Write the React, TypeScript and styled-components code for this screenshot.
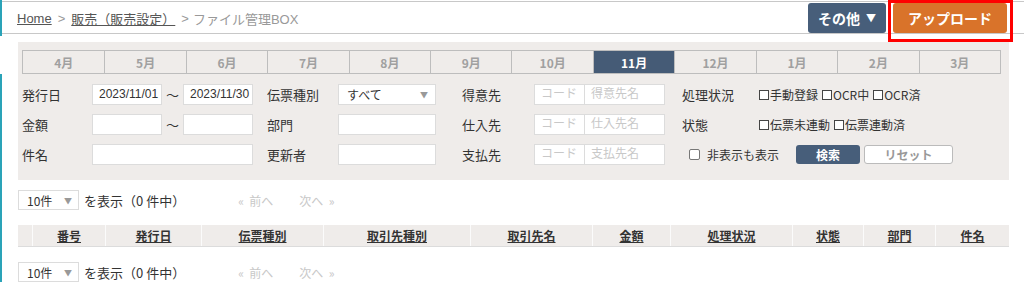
import styled, { createGlobalStyle } from "styled-components";

const colors = {
  teal: "#2aa3b8",
  line: "#c8c8c8",
  panel: "#efecea",
  navy: "#475e7a",
  orange: "#d9732a",
  red: "#ff0000",
  text: "#333333",
  sub: "#999999",
  faint: "#c8c8c8",
  border: "#dcdcdc",
};

const GlobalStyle = createGlobalStyle`
  * { box-sizing: border-box; }
  body {
    margin: 0;
    background: #fff;
    font-family: "Liberation Sans", "Noto Sans CJK JP", sans-serif;
    color: ${colors.text};
  }
`;

const months = ["4月", "5月", "6月", "7月", "8月", "9月", "10月", "11月", "12月", "1月", "2月", "3月"];
const columns = [
  { label: "", width: 14 },
  { label: "番号", width: 73 },
  { label: "発行日", width: 96 },
  { label: "伝票種別", width: 122 },
  { label: "取引先種別", width: 147 },
  { label: "取引先名", width: 122 },
  { label: "金額", width: 78 },
  { label: "処理状況", width: 122 },
  { label: "状態", width: 71 },
  { label: "部門", width: 72 },
  { label: "件名", width: 72 },
];

const Pager = ({ gap }: { gap: number }) => (
  <PagerRow style={{ marginTop: gap }}>
    <PageSelect>
      10件 <Caret>▼</Caret>
    </PageSelect>
    <PagerText>を表示（0 件中）</PagerText>
    <PagerLinks>
      <span>«&nbsp;&nbsp;前へ</span>
      <span>次へ&nbsp;&nbsp;»</span>
    </PagerLinks>
  </PagerRow>
);

export default function App() {
  return (
    <Page>
      <GlobalStyle />
      <Rail>
        <RailTop />
        <RailBottom />
      </Rail>
      <Main>
        <Header>
          <Breadcrumb>
            <Crumb>Home</Crumb>
            <Sep>&gt;</Sep>
            <Crumb>販売（販売設定）</Crumb>
            <Sep>&gt;</Sep>
            <Current>ファイル管理BOX</Current>
          </Breadcrumb>
          <Actions>
            <HeadButton $tone="navy">
              その他 <SmallCaret>▼</SmallCaret>
            </HeadButton>
            <Highlight>
              <HeadButton $tone="orange">アップロード</HeadButton>
            </Highlight>
          </Actions>
        </Header>

        <Body>
          <SearchPanel>
            <MonthTabs>
              {months.map((m) => (
                <MonthTab key={m} $active={m === "11月"}>
                  {m}
                </MonthTab>
              ))}
            </MonthTabs>

            <FormGrid>
              <Label>発行日</Label>
              <Range>
                <Input $w={70}>2023/11/01</Input>
                <Tilde>〜</Tilde>
                <Input $w={70}>2023/11/30</Input>
              </Range>
              <Label>伝票種別</Label>
              <SelectBox>
                すべて <Caret>▼</Caret>
              </SelectBox>
              <Label>得意先</Label>
              <Pair>
                <Input $w={51} $placeholder>コード</Input>
                <Input $w={80} $placeholder>得意先名</Input>
              </Pair>
              <Label>処理状況</Label>
              <Checks>
                <Check><Box />手動登録</Check>
                <Check><Box />OCR中</Check>
                <Check><Box />OCR済</Check>
              </Checks>

              <Label>金額</Label>
              <Range>
                <Input $w={70} />
                <Tilde>〜</Tilde>
                <Input $w={70} />
              </Range>
              <Label>部門</Label>
              <Input $w={98} />
              <Label>仕入先</Label>
              <Pair>
                <Input $w={51} $placeholder>コード</Input>
                <Input $w={80} $placeholder>仕入先名</Input>
              </Pair>
              <Label>状態</Label>
              <Checks>
                <Check><Box />伝票未連動</Check>
                <Check><Box />伝票連動済</Check>
              </Checks>

              <Label>件名</Label>
              <Input $w={161} />
              <Label>更新者</Label>
              <Input $w={98} />
              <Label>支払先</Label>
              <Pair>
                <Input $w={51} $placeholder>コード</Input>
                <Input $w={80} $placeholder>支払先名</Input>
              </Pair>
              <SearchActions>
                <HiddenToggle>
                  <RoundBox />
                  非表示も表示
                </HiddenToggle>
                <SearchButton>検索</SearchButton>
                <ResetButton>リセット</ResetButton>
              </SearchActions>
            </FormGrid>
          </SearchPanel>

          <Pager gap={10} />

          <TableHead>
            {columns.map((c, i) => (
              <HeadCell key={i} style={{ width: c.width }}>
                {c.label && <HeadLink>{c.label}</HeadLink>}
              </HeadCell>
            ))}
          </TableHead>

          <Pager gap={15} />
        </Body>
      </Main>
    </Page>
  );
}

const Page = styled.div`
  display: flex;
  width: 1024px;
  height: 282px;
  overflow: hidden;
`;

const Rail = styled.div`
  display: flex;
  flex-direction: column;
  width: 2px;
  flex-shrink: 0;
`;

const RailTop = styled.div`
  height: 36px;
  background: ${colors.teal};
`;

const RailBottom = styled.div`
  flex: 1;
  margin-top: 38px;
  background: ${colors.teal};
`;

const Main = styled.div`
  flex: 1;
  display: flex;
  flex-direction: column;
`;

const Header = styled.div`
  display: flex;
  align-items: center;
  justify-content: space-between;
  height: 36px;
  margin-top: 1px;
  padding: 0 17px 0 15px;
  border-top: 1px solid ${colors.line};
  border-bottom: 1px solid ${colors.line};
`;

const Breadcrumb = styled.div`
  display: flex;
  align-items: center;
  gap: 6px;
  font-size: 13px;
  padding-top: 1px;
`;

const Crumb = styled.span`
  color: #555;
  text-decoration: underline;
`;

const Sep = styled.span`
  color: ${colors.sub};
`;

const Current = styled.span`
  color: ${colors.sub};
  margin-left: -2px;
`;

const Actions = styled.div`
  display: flex;
  align-items: center;
  gap: 7px;
`;

const HeadButton = styled.div<{ $tone: "navy" | "orange" }>`
  display: flex;
  align-items: center;
  justify-content: center;
  gap: 6px;
  height: 30px;
  width: ${(p) => (p.$tone === "navy" ? "78px" : "114px")};
  border-radius: 3px;
  background: ${(p) => (p.$tone === "navy" ? colors.navy : colors.orange)};
  color: #fff;
  font-size: 14px;
  font-weight: bold;
  font-family: "Noto Sans CJK JP", sans-serif;
`;

const SmallCaret = styled.span`
  font-size: 10px;
`;

const Highlight = styled.div`
  position: relative;
  &::after {
    content: "";
    position: absolute;
    top: -3px;
    left: -5px;
    right: -6px;
    bottom: -9px;
    border: 3px solid ${colors.red};
    pointer-events: none;
  }
`;

const Body = styled.div`
  display: flex;
  flex-direction: column;
  padding: 0 15px 0 16px;
`;

const SearchPanel = styled.div`
  margin-top: 8px;
  background: ${colors.panel};
  padding: 8px 8px 15px 4px;
`;

const MonthTabs = styled.div`
  display: grid;
  grid-template-columns: repeat(12, 1fr);
  border: 1px solid #bdbdbd;
  background: ${colors.panel};
`;

const MonthTab = styled.div<{ $active?: boolean }>`
  height: 22px;
  display: flex;
  align-items: center;
  justify-content: center;
  font-size: 12px;
  font-weight: bold;
  font-family: "Noto Sans CJK JP", sans-serif;
  color: ${(p) => (p.$active ? "#fff" : "#a0a0a0")};
  background: ${(p) => (p.$active ? "#455b76" : "transparent")};
  & + & {
    border-left: 1px solid #bdbdbd;
  }
`;

const FormGrid = styled.div`
  display: grid;
  grid-template-columns: 70px 175px 71px 124px 72px 148px 77px 1fr;
  grid-auto-rows: 21px;
  row-gap: 9px;
  margin-top: 10px;
  align-items: center;
`;

const Label = styled.div`
  font-size: 13px;
  font-family: "Noto Sans CJK JP", sans-serif;
  color: ${colors.text};
`;

const Range = styled.div`
  display: flex;
  align-items: center;
`;

const Pair = styled.div`
  display: flex;
`;

const Input = styled.div<{ $w: number; $placeholder?: boolean }>`
  width: ${(p) => p.$w}px;
  height: 21px;
  background: #fff;
  border: 1px solid ${colors.border};
  font-size: 12px;
  line-height: 19px;
  padding: 0 6px;
  color: ${(p) => (p.$placeholder ? colors.faint : colors.text)};
  white-space: nowrap;
  overflow: hidden;
  & + & {
    border-left: none;
  }
`;

const Tilde = styled.span`
  width: 21px;
  text-align: center;
  font-size: 13px;
`;

const SelectBox = styled.div`
  width: 98px;
  height: 21px;
  background: #fff;
  border: 1px solid ${colors.border};
  display: flex;
  align-items: center;
  justify-content: space-between;
  padding: 0 7px 0 8px;
  font-size: 12px;
  font-family: "Noto Sans CJK JP", sans-serif;
`;

const Caret = styled.span`
  font-size: 8px;
  color: #999;
`;

const Checks = styled.div`
  display: flex;
  gap: 4px;
`;

const Check = styled.label`
  display: flex;
  align-items: center;
  font-size: 12px;
  font-family: "Noto Sans CJK JP", sans-serif;
  color: ${colors.text};
`;

const Box = styled.span`
  width: 10px;
  height: 10px;
  border: 1px solid #444;
  background: #fff;
  margin-right: 1px;
`;

const SearchActions = styled.div`
  grid-column: 7 / 9;
  display: flex;
  align-items: center;
`;

const HiddenToggle = styled.label`
  display: flex;
  align-items: center;
  gap: 7px;
  margin-left: 7px;
  width: 107px;
  font-size: 12px;
  font-family: "Noto Sans CJK JP", sans-serif;
`;

const RoundBox = styled.span`
  width: 11px;
  height: 11px;
  border: 1px solid #777;
  border-radius: 2px;
  background: #fff;
`;

const SearchButton = styled.div`
  width: 64px;
  height: 19px;
  border-radius: 3px;
  background: ${colors.navy};
  color: #fff;
  font-size: 12px;
  font-weight: bold;
  font-family: "Noto Sans CJK JP", sans-serif;
  display: flex;
  align-items: center;
  justify-content: center;
`;

const ResetButton = styled(SearchButton)`
  width: 89px;
  margin-left: 4px;
  background: #fff;
  border: 1px solid #bbb;
  color: #999;
`;

const PagerRow = styled.div`
  display: flex;
  align-items: center;
  height: 20px;
`;

const PageSelect = styled.div`
  width: 61px;
  height: 20px;
  border: 1px solid ${colors.border};
  background: #fff;
  display: flex;
  align-items: center;
  justify-content: space-between;
  padding: 0 6px 0 8px;
  font-size: 12px;
  font-family: "Noto Sans CJK JP", sans-serif;
`;

const PagerText = styled.span`
  margin-left: 5px;
  font-size: 13px;
  font-family: "Noto Sans CJK JP", sans-serif;
`;

const PagerLinks = styled.div`
  display: flex;
  gap: 26px;
  margin-left: 53px;
  font-size: 12px;
  font-family: "Noto Sans CJK JP", sans-serif;
  color: ${colors.faint};
`;

const TableHead = styled.div`
  display: flex;
  margin-top: 15px;
  height: 22px;
  background: ${colors.panel};
  border-bottom: 1px solid ${colors.border};
`;

const HeadCell = styled.div`
  display: flex;
  align-items: center;
  justify-content: center;
  flex-shrink: 0;
  & + & {
    border-left: 1px solid #fbfbfb;
  }
  &:last-child {
    flex: 1;
  }
`;

const HeadLink = styled.span`
  font-size: 12px;
  font-weight: bold;
  font-family: "Noto Sans CJK JP", sans-serif;
  color: ${colors.text};
  text-decoration: underline;
`;
